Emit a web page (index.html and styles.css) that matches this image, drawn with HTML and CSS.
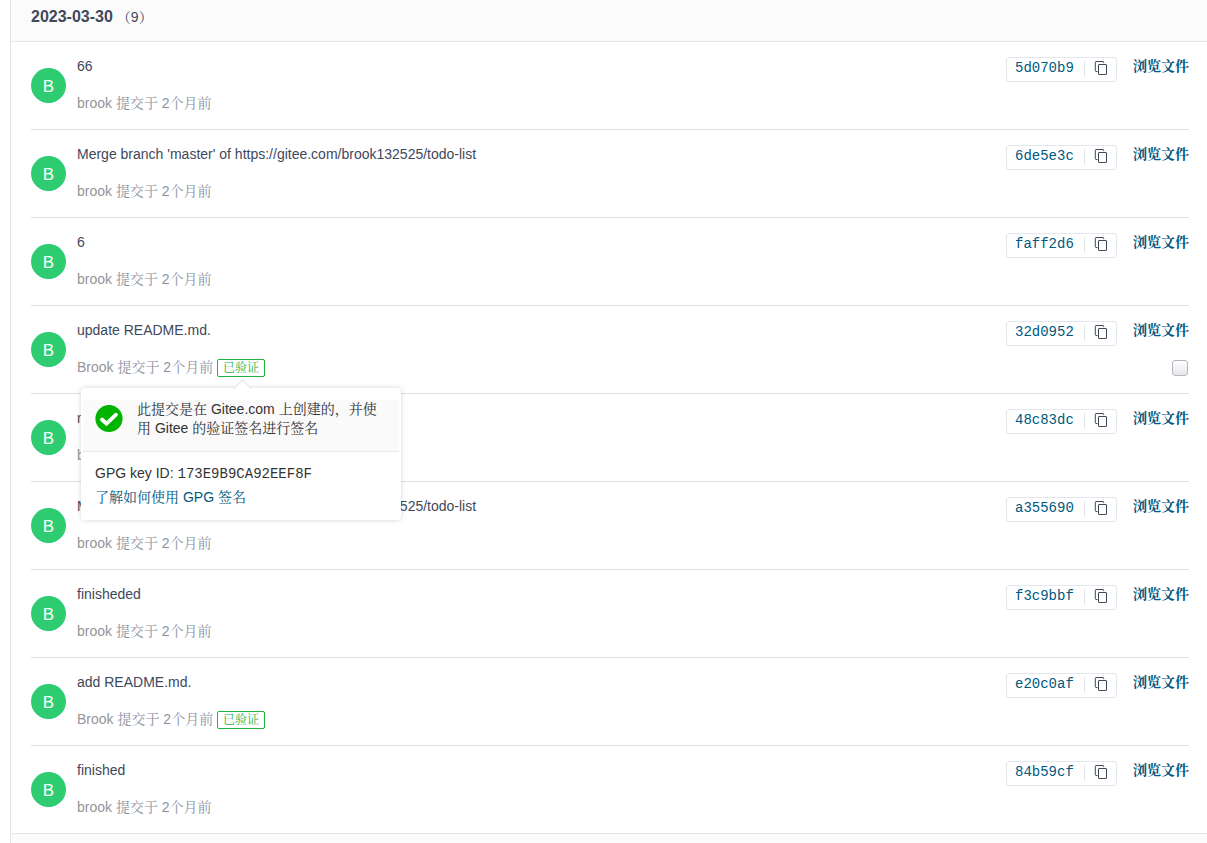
FILE: index.html
```
<!DOCTYPE html>
<html lang="zh-CN">
<head>
<meta charset="utf-8">
<title>提交</title>
<link rel="stylesheet" href="styles.css">
</head>
<body>
<svg class="sprite" aria-hidden="true">
  <symbol id="copy" viewBox="0 0 14 14">
    <path d="M3.500 10.500H2A.8 .8 0 0 1 1.300 9.700V1.300A.8 .8 0 0 1 2 .5H9A.8 .8 0 0 1 9.700 1.300V2.200" fill="none" stroke="currentColor"/>
    <rect x="4.500" y="3.500" width="8" height="10" rx=".5" fill="none" stroke="currentColor"/>
  </symbol>
</svg>
<main class="commits">
  <header class="group-head"><h2 class="date">2023-03-30</h2><span class="count">（9）</span></header>
  <ul class="list" id="list"></ul>
  <footer class="next-group"></footer>
</main>
<template id="row">
  <li class="commit">
    <span class="avatar">B</span>
    <div class="content">
      <p class="title"></p>
      <div class="meta"><span class="author"></span> <span>提交于</span> <time>2个月前</time></div>
    </div>
    <div class="actions">
      <div class="hash"><a class="sha" href="#"></a><button class="copy" type="button" aria-label="复制"><svg class="copy-icon"><use href="#copy"/></svg></button></div>
      <a class="browse" href="#">浏览文件</a>
    </div>
  </li>
</template>
<template id="popup">
  <div class="popup" role="tooltip">
    <div class="popup-head">
      <svg class="check" viewBox="0 0 28 28" aria-hidden="true"><circle cx="14" cy="13.500" r="13.600" fill="#00b400"/><path d="M7 14.500L11.500 18.700L21 9.700" fill="none" stroke="#fff" stroke-width="3.800" stroke-linecap="round" stroke-linejoin="miter"/></svg>
      <p class="popup-text">此提交是在 Gitee.com 上创建的，并使用 Gitee 的验证签名进行签名</p>
    </div>
    <div class="popup-body">
      <div>GPG key ID: <span class="key">173E9B9CA92EEF8F</span></div>
      <a class="learn" href="#">了解如何使用 GPG 签名</a>
    </div>
  </div>
</template>
<script src="app.js"></script>
</body>
</html>
```

FILE: app.js
```
const commits = [
  { title: '66', author: 'brook', sha: '5d070b9' },
  { title: "Merge branch 'master' of https://gitee.com/brook132525/todo-list", author: 'brook', sha: '6de5e3c' },
  { title: '6', author: 'brook', sha: 'faff2d6' },
  { title: 'update README.md.', author: 'Brook', sha: '32d0952', verified: true, open: true },
  { title: 'new', author: 'brook', sha: '48c83dc' },
  { title: "Merge branch 'master' of https://gitee.com/brook132525/todo-list", author: 'brook', sha: 'a355690' },
  { title: 'finisheded', author: 'brook', sha: 'f3c9bbf' },
  { title: 'add README.md.', author: 'Brook', sha: 'e20c0af', verified: true },
  { title: 'finished', author: 'brook', sha: '84b59cf' }
];

const list = document.getElementById('list');
for (const c of commits) {
  const row = document.getElementById('row').content.cloneNode(true);
  row.querySelector('.title').textContent = c.title;
  row.querySelector('.author').textContent = c.author;
  row.querySelector('.sha').textContent = c.sha;
  if (c.verified) {
    const wrap = document.createElement('span');
    wrap.className = 'badge-wrap';
    const badge = document.createElement('button');
    badge.type = 'button';
    badge.className = 'badge';
    badge.textContent = '已验证';
    wrap.append(badge);
    if (c.open) wrap.append(document.getElementById('popup').content.cloneNode(true));
    row.querySelector('.meta').append(' ', wrap);
  }
  if (c.open) {
    const box = document.createElement('input');
    box.type = 'checkbox';
    box.className = 'pick';
    box.setAttribute('aria-label', '选择提交');
    row.querySelector('.actions').append(box);
  }
  list.append(row);
}
```

FILE: styles.css
```
* { box-sizing: border-box; }
body {
  margin: 0;
  background: #fff;
  color: #40485b;
  font: 14px/20px "Liberation Sans", "Noto Serif CJK SC", "Noto Sans CJK SC", sans-serif;
}
p, h2, ul { margin: 0; padding: 0; }
a { color: #005980; text-decoration: none; }
button { font: inherit; cursor: pointer; }
.sprite { position: absolute; width: 0; height: 0; }

.commits {
  min-height: 100vh;
  margin-left: 10px;
  border-left: 1px solid #e3e6ea;
  display: flex;
  flex-direction: column;
}
.group-head {
  display: flex;
  align-items: center;
  gap: 4px;
  padding: 6px 20px 14px;
  border-bottom: 1px solid #e3e6ea;
  background: #fbfbfb;
}
.date { font-size: 16px; line-height: 21px; }
.next-group {
  flex: 1;
  min-height: 9px;
  border-top: 1px solid #e3e6ea;
  background: #fbfbfb;
}

.list { list-style: none; padding: 0 18px 0 20px; }
.commit {
  display: flex;
  align-items: flex-start;
  padding: 14px 0 16px;
  border-bottom: 1px solid #dcdfe3;
}
.commit:last-child { border-bottom: 0; }
.avatar {
  flex: none;
  width: 35px;
  height: 35px;
  margin: 12px 11px 0 0;
  border-radius: 50%;
  background: #2ecc71;
  color: #fff;
  font-size: 17px;
  line-height: 37px;
  text-align: center;
}
.content { flex: 1; min-width: 0; }
.meta {
  margin-top: 17px;
  color: #8c92a4;
  line-height: 20px;
}
.author { color: #969696; }
.badge-wrap {
  display: inline-block;
  position: relative;
  line-height: 18px;
  vertical-align: top;
}
.badge {
  display: block;
  width: 48px;
  height: 18px;
  margin-top: 2px;
  padding: 0;
  border: 1px solid #1db440;
  border-radius: 2px;
  background: #fff;
  color: #1db440;
  font-size: 12px;
  line-height: 16px;
}

.actions {
  display: flex;
  flex-wrap: wrap;
  justify-content: flex-end;
  width: 183px;
  column-gap: 16px;
}
.hash {
  display: flex;
  align-items: flex-start;
  width: 111px;
  height: 25px;
  margin-top: 1px;
  border: 1px solid #e3e6ea;
  border-radius: 3px;
}
.sha {
  flex: 1;
  padding-left: 8px;
  font-family: "Liberation Mono", monospace;
}
.copy {
  display: flex;
  align-items: flex-start;
  justify-content: center;
  width: 32px;
  height: 16px;
  margin-top: 3px;
  padding: 0;
  border: 0;
  border-left: 1px solid #e3e6ea;
  background: none;
  color: #40485b;
}
.copy-icon { width: 14px; height: 14px; }
.browse { font-weight: 700; }
.pick {
  appearance: none;
  width: 16px;
  height: 16px;
  margin: 14px 1px 0 0;
  border: 1px solid #b4b7be;
  border-radius: 3px;
  background: linear-gradient(#fff, #e5e6eb);
}

.popup {
  position: absolute;
  z-index: 2;
  top: 31px;
  left: -136px;
  width: 320px;
  padding: 12px 2px 11px;
  border-radius: 4px;
  background: #fff;
  box-shadow: 0 0 5px rgba(50, 60, 80, .22);
  color: #333;
}
.popup::before {
  content: "";
  position: absolute;
  top: -6px;
  left: 155px;
  width: 12px;
  height: 12px;
  border: 1px solid #e0e2e6;
  border-width: 1px 0 0 1px;
  background: #fff;
  transform: rotate(45deg);
}
.popup-head {
  display: flex;
  gap: 14px;
  padding: 0 12px 13px;
  border-bottom: 1px solid #e8eaec;
  background: #fafafa;
}
.check {
  flex: none;
  width: 28px;
  height: 28px;
  margin-top: 5px;
}
.popup-text { width: 244px; line-height: 19px; }
.popup-body {
  padding: 9px 12px 0;
  line-height: 24px;
}
.key { font-family: "Liberation Mono", monospace; line-height: 16px; }
.learn { display: block; }
```
